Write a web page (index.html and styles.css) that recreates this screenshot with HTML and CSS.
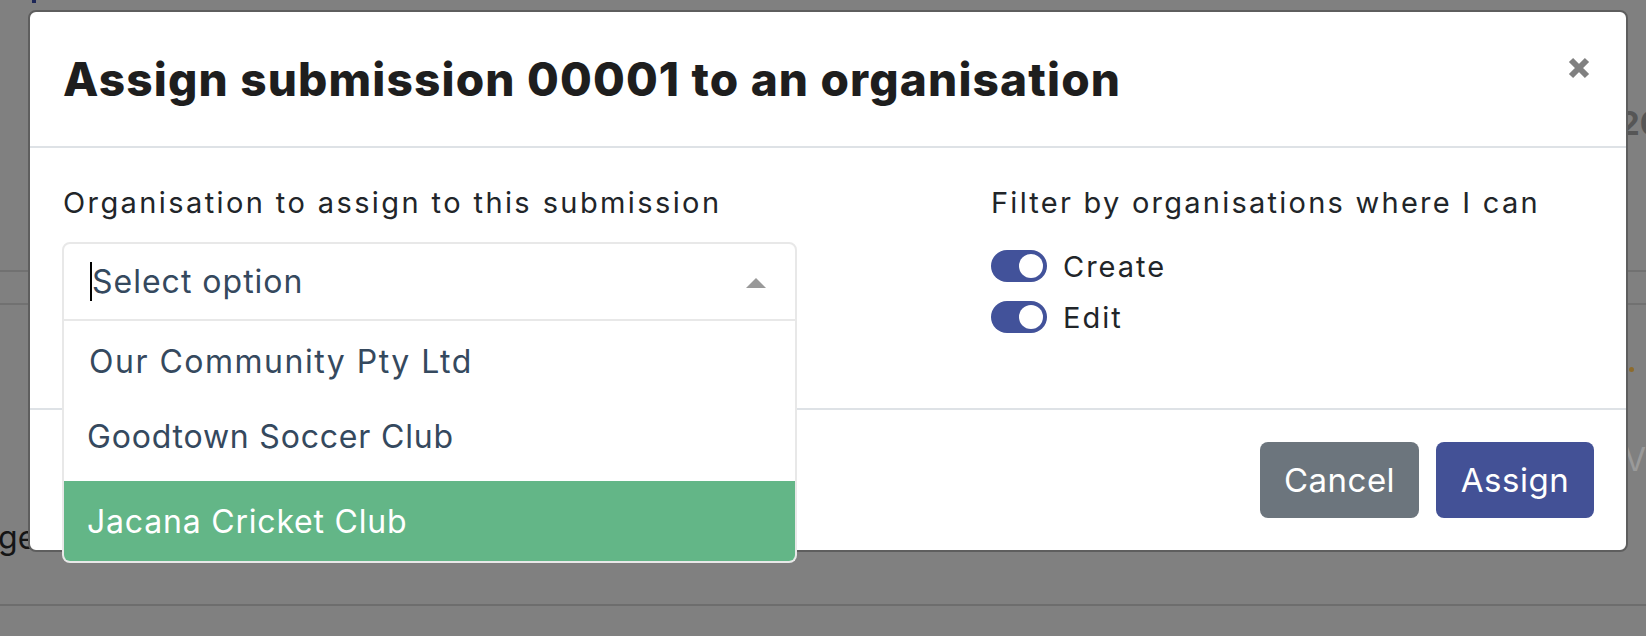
FILE: index.html
```html
<!DOCTYPE html>
<html lang="en">
<head>
<meta charset="utf-8">
<title>Assign submission</title>
<link rel="stylesheet" href="styles.css">
</head>
<body>
<div class="bg">
  <div class="bg-mark"></div>
  <div class="bg-year">20</div>
  <div class="bg-rows">
    <div class="bg-row"></div>
  </div>
  <div class="bg-dot"></div>
  <div class="bg-v">V</div>
  <div class="bg-ge">ge</div>
  <div class="bg-line"></div>
</div>

<div class="modal" role="dialog">
  <div class="modal-header">
    <h2 class="modal-title">Assign submission 00001 to an organisation</h2>
    <button class="close" aria-label="Close">
      <svg width="22" height="22" viewBox="0 0 22 22"><path d="M3 3 L19 19 M19 3 L3 19" stroke="#808080" stroke-width="6" stroke-linecap="butt"/></svg>
    </button>
  </div>
  <div class="modal-body">
    <div class="col-left">
      <div class="field-label">Organisation to assign to this submission</div>
      <div class="multiselect">
        <div class="ms-tags">
          <span class="ms-caret"></span><span class="ms-placeholder">Select option</span>
          <svg class="ms-arrow" width="20" height="10" viewBox="0 0 20 10"><polygon points="10,0 20,10 0,10" fill="#999"/></svg>
        </div>
        <ul class="ms-list">
          <li class="ms-option first">Our Community Pty Ltd</li>
          <li class="ms-option second">Goodtown Soccer Club</li>
          <li class="ms-option active">Jacana Cricket Club</li>
        </ul>
      </div>
    </div>
    <div class="col-right">
      <div class="field-label filter-label">Filter by organisations where I can</div>
      <div class="switch-row first"><span class="switch"><span class="knob"></span></span><span class="switch-label">Create</span></div>
      <div class="switch-row"><span class="switch"><span class="knob"></span></span><span class="switch-label">Edit</span></div>
    </div>
  </div>
  <div class="modal-footer">
    <button class="btn btn-cancel">Cancel</button>
    <button class="btn btn-assign">Assign</button>
  </div>
</div>
</body>
</html>
```

FILE: styles.css
```css
* { box-sizing: border-box; }
html, body { margin: 0; padding: 0; }
body {
  width: 1646px;
  height: 636px;
  overflow: hidden;
  background: #808080;
  font-family: "Inter", "Liberation Sans", sans-serif;
  position: relative;
}

/* background page (dimmed by backdrop) */
.bg { height: 636px; display: flex; flex-direction: column; }
.bg-mark { margin-left: 32px; width: 4px; height: 3px; background: #1d2657; }
.bg-year {
  margin: 102px 0 0 1619px;
  font-weight: 700; font-size: 33px; line-height: 36px;
  color: #565656; white-space: nowrap;
}
.bg-rows { margin-top: 129px; }
.bg-row { height: 35px; border-top: 2px solid #717171; border-bottom: 2px solid #717171; }
.bg-dot { margin: 62px 0 0 1629px; width: 5px; height: 5px; border-radius: 50%; background: #8d6b2c; }
.bg-v { margin: 70px 0 0 1624px; font-size: 32px; line-height: 36px; color: #9a9a9a; white-space: nowrap; }
.bg-ge { margin: 42px 0 0 -2px; font-size: 32px; line-height: 36px; color: #151515; }
.bg-line { margin-top: 48px; height: 2px; background: #6d6d6d; }

/* modal */
.modal {
  position: absolute;
  left: 28px; top: 10px;
  width: 1600px; height: 542px;
  background: #fff;
  border: 2px solid #5e5e5e;
  border-radius: 8px;
  display: flex; flex-direction: column;
}
.modal-header {
  height: 136px;
  border-bottom: 2px solid #dee2e6;
  display: flex; align-items: center; justify-content: space-between;
  padding: 0 36px 0 33px;
}
.modal-title {
  margin: 0;
  font-weight: 800; font-size: 46px; letter-spacing: 1.15px;
  color: #1e1e1e; line-height: 56px;
}
.close {
  border: 0; background: none; padding: 0; margin: 0;
  width: 22px; height: 22px; align-self: flex-start; margin-top: 45px;
}
.close svg { display: block; }

.modal-body {
  height: 260px;
  display: grid;
  grid-template-columns: 868px 1fr;
  column-gap: 60px;
  padding: 34px 32px 0 33px;
}
.field-label {
  font-size: 29px; line-height: 42px; letter-spacing: 2.4px;
  color: #212529; white-space: nowrap;
}
.filter-label { letter-spacing: 2.25px; }

.multiselect { position: relative; width: 735px; margin-top: 18px; margin-left: -1px; }
.ms-tags {
  height: 79px;
  border: 2px solid #e8e8e8;
  border-radius: 8px 8px 0 0;
  display: flex; align-items: center;
  padding-left: 26px; padding-right: 29px;
  position: relative;
}
.ms-caret { display: inline-block; width: 2px; height: 39px; background: #000; }
.ms-placeholder {
  font-size: 32px; letter-spacing: 1px; color: #35495e; line-height: 40px;
}
.ms-arrow { margin-left: auto; display: block; margin-top: 3px; }
.ms-list {
  position: absolute; left: 0; right: 0; top: 79px;
  margin: 0; padding: 0; list-style: none;
  background: #fff;
  border: 2px solid #e8e8e8; border-top: 0;
  border-radius: 0 0 8px 8px;
  overflow: hidden;
  z-index: 5;
}
.ms-option {
  height: 80px;
  display: flex; align-items: center;
  padding-left: 23px;
  font-size: 32px; letter-spacing: 0.8px; color: #35495e;
}
.ms-option.first { padding-left: 25px; letter-spacing: 1.5px; }
.ms-option.second { padding-bottom: 10px; }
.ms-option.active { background: #63b687; color: #fff; }

.switch-row { display: flex; align-items: center; height: 42px; margin-top: 9px; }
.switch-row.first { margin-top: 21px; }
.switch {
  width: 56px; height: 32px; border-radius: 16px;
  background: #42529a; flex: none;
  display: flex; align-items: center; justify-content: flex-end;
  padding-right: 4px;
}
.knob { width: 24px; height: 24px; border-radius: 50%; background: #fff; }
.switch-label {
  margin-left: 16px;
  font-size: 29px; letter-spacing: 2px; color: #212529;
}

.modal-footer {
  flex: 1;
  border-top: 2px solid #dee2e6;
  display: flex; justify-content: flex-end; align-items: flex-start;
  padding: 32px 32px 0 0;
  gap: 17px;
}
.btn {
  height: 76px; border: 0; border-radius: 8px;
  font-family: inherit; font-size: 33px; color: #fff;
  letter-spacing: 0.5px;
  display: flex; align-items: center; justify-content: center;
}
.btn-cancel { width: 159px; background: #6c757d; }
.btn-assign { width: 158px; background: #435196; }
```
